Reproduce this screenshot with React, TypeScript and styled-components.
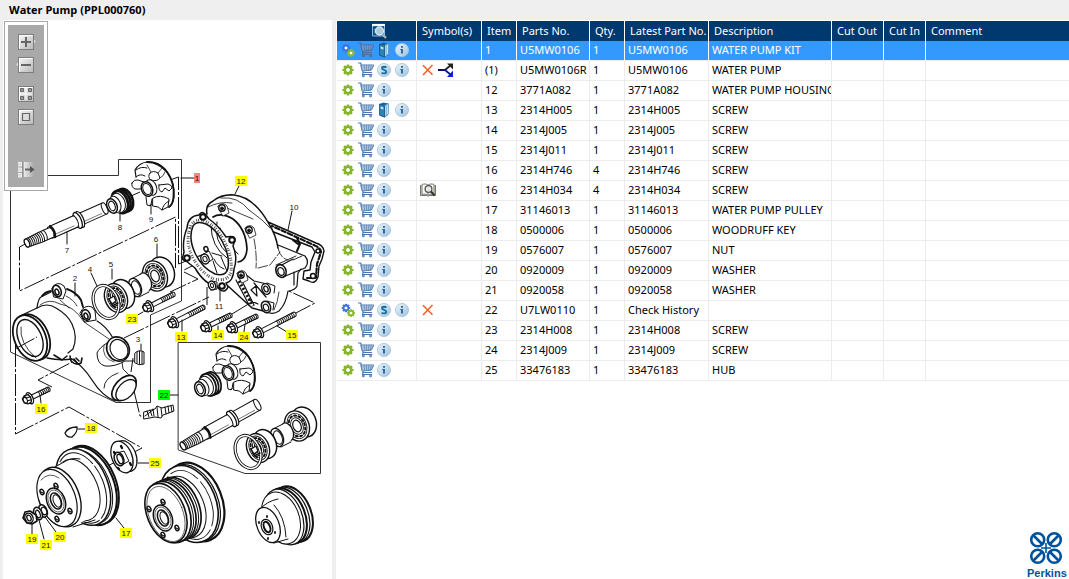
import React from "react";
import styled, { createGlobalStyle, css } from "styled-components";

const GlobalStyle = createGlobalStyle`
  * { box-sizing: border-box; }
  body {
    margin: 0;
    background: #efefef;
    color: #000;
    font: 11px/18px "Noto Sans", "Open Sans", sans-serif;
  }
`;

const Page = styled.div`
  display: flex;
  flex-direction: column;
  min-height: 100vh;
`;

const TitleBar = styled.header`
  height: 20px;
  padding: 0 9px;
  background: #efefef;
`;

const Title = styled.h1`
  margin: 0;
  font-family: "Open Sans", "Noto Sans", sans-serif;
  font-size: 11px;
  font-weight: 700;
  line-height: 20px;
`;

const Workspace = styled.main`
  display: flex;
  flex: 1;
  gap: 4px;
  padding-left: 3px;
`;

const DrawingPane = styled.section`
  position: relative;
  flex: none;
  background: #fff;
`;

const Drawing = styled.svg`
  display: block;
  fill: none;
  stroke: #111;
  stroke-width: 1;
  stroke-linecap: round;
  stroke-linejoin: round;

  text {
    font: 8px "Liberation Sans", Arial, sans-serif;
    fill: #111;
    stroke: none;
    text-anchor: middle;
  }
`;

const Toolbar = styled.div`
  position: absolute;
  top: 1px;
  left: 1px;
  display: flex;
  flex-direction: column;
  align-items: center;
  width: 44px;
  padding-top: 7px;
  height: 170px;
  border: 1px solid #a9a9a9;
  background: #a9a9a9;
  box-shadow: inset 0 0 0 3px #fff;
`;

const ToolButton = styled.button<{ $gap?: number }>`
  display: block;
  flex: none;
  width: 20px;
  height: 23px;
  padding: 3px 0 0;
  margin-top: ${(p) => p.$gap ?? 0}px;
  border: 0;
  background: none;

  svg { display: block; }
`;

const PartsPane = styled.section`
  display: flex;
  flex: 1;
  flex-direction: column;
  min-width: 0;
  padding: 1px 0 0 1px;
  background: #fff;
`;

const PartsTable = styled.table`
  width: 100%;
  table-layout: fixed;
  border-collapse: separate;
  border-spacing: 0;
`;

const Column = styled.col<{ $width?: number }>`
  ${(p) => p.$width && css`width: ${p.$width}px;`}
`;

const HeadCell = styled.th`
  height: 20px;
  padding: 0 0 1px 5px;
  overflow: hidden;
  border-right: 1px solid #fff;
  background: #003870;
  color: #fff;
  font-weight: 400;
  text-align: left;
  white-space: nowrap;

  &:last-child { border-right: 0; }
  svg { display: block; margin: 0 auto; }
`;

const Cell = styled.td`
  height: 20px;
  padding: 0 0 1px 3px;
  overflow: hidden;
  border-right: 1px solid #ececec;
  border-bottom: 1px solid #ececec;
  white-space: nowrap;

  &:last-child { border-right: 0; }
`;

const Row = styled.tr<{ $selected?: boolean }>`
  ${(p) =>
    p.$selected &&
    css`
      color: #fff;
      ${Cell} {
        background: #3399ff;
        border-right-color: #fff;
      }
    `}
`;

const IconRow = styled.div`
  display: flex;
  align-items: center;
  height: 18px;
  margin-left: -1px;
`;

const IconButton = styled.button`
  display: grid;
  place-items: center;
  width: 18px;
  height: 18px;
  padding: 0;
  border: 0;
  background: none;
`;

const Brand = styled.footer`
  display: flex;
  justify-content: flex-end;
  margin-top: auto;
  padding: 0 2px 1px 0;
`;

/* ---------- icons ---------- */

function GearShape({ x, y, s, color }: { x: number; y: number; s: number; color: string }) {
  return (
    <g transform={`translate(${x} ${y}) scale(${s})`}>
      {[0, 45, 90, 135].map((r) => (
        <rect key={r} x="-1.3" y="-5.5" width="2.6" height="11" rx="0.6" fill={color} transform={`rotate(${r})`} />
      ))}
      <circle r="3.1" fill="#fff" stroke={color} strokeWidth="2.4" />
    </g>
  );
}

const Gear = () => (
  <svg width="18" height="18"><GearShape x={9} y={9} s={1} color="#86b52c" /></svg>
);

const Gears = () => (
  <svg width="18" height="18">
    <GearShape x={7} y={7} s={0.78} color="#3f74dc" />
    <GearShape x={12} y={12} s={0.72} color="#8cba2e" />
  </svg>
);

const Cart = ({ dim }: { dim?: boolean }) => (
  <svg width="18" height="18" fill="none" stroke={dim ? "#4c6b98" : "#4a76ad"} strokeLinecap="round">
    <path d="M1.5 2h2.300l2.400 9.500h8.300" strokeWidth="1.200" />
    <path d="M4.200 4h12.600l-2.500 5.200-8.800.800z" fill={dim ? "#83aede" : "#d3e3f3"} strokeWidth=".9" />
    <path d="M4.800 6h11M5.400 8h9.500M7 4l.7 5.500M9.400 4l.3 5.500M11.800 4l-.2 5.500M14.200 4l-.7 5" strokeWidth=".6" />
    <path d="M6.200 11.500l-.700 2h9.300" strokeWidth="1.100" />
    <circle cx="6.200" cy="15" r=".9" /><circle cx="13.500" cy="15" r=".9" />
  </svg>
);

const Badge = ({ letter }: { letter: "i" | "S" }) => (
  <svg width="18" height="18">
    <defs>
      <linearGradient id="badge" x1="0" y1="0" x2="1" y2="1">
        <stop offset="0" stopColor="#edf5fa" /><stop offset="1" stopColor="#9cc2de" />
      </linearGradient>
    </defs>
    <circle cx="9" cy="9" r="6.600" fill="url(#badge)" stroke="#a3c4de" strokeWidth=".8" />
    {letter === "i" ? (
      <path d="M8 5h2v1.8H8zM7.2 8H10v4.6H8V9h-.8z" fill="#3567a3" />
    ) : (
      <path d="M11.3 6.6C10.6 5.7 7 5.2 7 7.2c0 2 4.3 1.4 4.3 3.6 0 2.1-3.6 1.8-4.7.8" fill="none" stroke="#1470a0" strokeWidth="1.9" />
    )}
  </svg>
);

const Book = () => (
  <svg width="18" height="18">
    <path d="M4.500 3l4-1.500 4.500 1v11.500l-3.500 2.500-5-2z" fill="#1d669f" />
    <path d="M9.500 4.500l4-2v10.500l-4 3z" fill="#c3e0f0" stroke="#4d8dba" strokeWidth=".7" />
    <path d="M11.200 4v10.500" stroke="#5f9cc4" strokeWidth=".7" />
    <path d="M4.500 3l5 1.500V16l-5-2z" fill="#2e83b7" stroke="#154f80" strokeWidth=".7" />
    <path d="M5.700 5.600l2.600.8v2l-2.600-.8z" fill="#d8edf7" />
  </svg>
);

const Cross = () => (
  <svg width="18" height="18"><path d="M4 4.2l9.5 9.5M13.5 4L4 14" fill="none" stroke="#f4632a" strokeWidth="1.6" /></svg>
);

const Branch = () => (
  <svg width="18" height="18" fill="none">
    <path d="M1 9h7" stroke="#10106c" strokeWidth="2" />
    <path d="M8 9l6-5" stroke="#222" strokeWidth="1.8" />
    <path d="M8 9l6 5" stroke="#0a14a8" strokeWidth="1.8" />
    <path d="M10 2.500h6v6z" fill="#222" />
    <path d="M16 9.500v6.500h-6z" fill="#0a1ee0" />
  </svg>
);

const BookSearch = () => (
  <svg width="18" height="18" fill="none" stroke="#77776c">
    <path d="M1.5 4v10.5h6.5l1 1 1-1h6.5V4" fill="#ddddce" />
    <path d="M3 3.5c2.5-1 4.5-.5 6 .5 1.500-1 3.500-1.500 6-.5v10c-2.500-.5-4.500-.5-6 .8-1.500-1.300-3.500-1.300-6-.8zM9 4v10" fill="#fafaf4" />
    <circle cx="9.500" cy="8" r="3.400" fill="#e4e9e6" stroke="#555" strokeWidth="1.300" />
    <path d="M12 10.500l3.500 4" stroke="#333" strokeWidth="2" />
  </svg>
);

const WindowSearch = () => (
  <svg width="18" height="18" fill="none">
    <path d="M2.500 3h12v11h-12z" fill="#0f4f86" stroke="#8dbcdc" />
    <path d="M2 3h13" stroke="#fff" strokeWidth="2.200" />
    <path d="M4 7.500h2M4 10h2" stroke="#5ea5d0" />
    <circle cx="9.500" cy="9" r="4" fill="#a4cbe4" stroke="#d8e4ec" strokeWidth="1.400" />
    <path d="M12.500 12.200l3.500 3.800" stroke="#a9b3bd" strokeWidth="2.200" />
  </svg>
);

function ToolIcon({ kind }: { kind: "in" | "out" | "fit" | "actual" | "panel" }) {
  return (
    <svg width="20" height="18" fill="none" stroke="#666">
      <defs>
        <linearGradient id="tool" x1="0" y1="0" x2="1" y2="1">
          <stop offset="0" stopColor="#f7f7f7" /><stop offset="1" stopColor="#b8b8b8" />
        </linearGradient>
        <linearGradient id="fade" x1="0" y1="0" x2="1" y2="0">
          <stop offset="0" stopColor="#f0f0f0" /><stop offset="1" stopColor="#a9a9a9" />
        </linearGradient>
      </defs>
      {kind === "in" && <path d="M17 6l2 2.500-2 2.500z" fill="#ddd" stroke="#eee" />}
      {kind === "out" && <path d="M3 6L1 8.500 3 11z" fill="#ddd" stroke="#eee" />}
      {kind !== "panel" && <rect x="2.500" y="1.500" width="15" height="15" fill="url(#tool)" stroke="#7d7d7d" />}
      {kind !== "panel" && <path d="M3.500 15.500V2.500H16.500" stroke="#fff" />}
      {kind === "in" && <path d="M5 9h10M10 4v10" strokeWidth="2" />}
      {kind === "out" && <path d="M5 9h10" strokeWidth="2" />}
      {kind === "fit" && (
        <>
          <path d="M4.500 3.500h3v3h-3zM12.500 3.500h3v3h-3zM4.500 11.500h3v3h-3zM12.500 11.500h3v3h-3z" fill="#999" />
          <path d="M10 3v12M4 9h12" stroke="#fff" />
        </>
      )}
      {kind === "actual" && <path d="M6.500 5.500h7v7h-7z" fill="#ddd" strokeWidth="1.200" />}
      {kind === "panel" && (
        <>
          <path d="M7 1h11v15H7z" fill="url(#fade)" stroke="none" />
          <path d="M2 1.500h3.500v3.500H2M2 7h3.500v3.500H2M2 12.500h3.500V16H2" fill="#ddd" stroke="#eee" />
          <path d="M7 1v15" stroke="#777" />
          <path d="M9 8.500h6" strokeWidth="2" />
          <path d="M14 5l4.500 3.500L14 12z" fill="#555" stroke="none" />
        </>
      )}
    </svg>
  );
}

/* ---------- exploded drawing ---------- */

type Pt = { x: number; y: number };
const WHITE = "#fff";

function Disc({ x, y, a, b, w = 1, fill = WHITE, r = -22, dash }: Pt & { a: number; b: number; w?: number; fill?: string; r?: number; dash?: string }) {
  return <ellipse rx={a} ry={b} transform={`translate(${x} ${y}) rotate(${r})`} fill={fill} strokeWidth={w} strokeDasharray={dash} />;
}

function Bolt({ x, y, x2, y2 }: Pt & { x2: number; y2: number }) {
  const len = Math.hypot(x2 - x, y2 - y);
  const angle = (Math.atan2(y2 - y, x2 - x) * 180) / Math.PI;
  const threads: number[] = [];
  for (let t = Math.max(9, len * 0.52); t < len; t += 2) threads.push(t);
  return (
    <g transform={`translate(${x} ${y}) rotate(${angle})`}>
      <path d={`M3 -2.200H${len}q2 2.200 0 4.400H3`} fill={WHITE} />
      {threads.map((t) => <path key={t} d={`M${t} -2.400q1.500 2.400 0 4.800`} strokeWidth=".9" />)}
      <ellipse cx="2" rx="3" ry="6" fill={WHITE} strokeWidth="1.300" />
      <path d="M-5 -2.500l3-2 4 .5 1 4-1 4-4 .5-3-2.500z" fill={WHITE} strokeWidth="1.300" />
      <ellipse cx="-3" rx="2" ry="3" />
      <path d="M-2-4.500l1 3 4 .5M-1 1.500l3.500.5" />
    </g>
  );
}

function Shaft({ x, y, angle }: Pt & { angle: number }) {
  return (
    <g transform={`translate(${x} ${y}) rotate(${angle})`}>
      <path d="M58 -6H85q4 6 0 12H58z" fill={WHITE} />
      <ellipse cx="85" rx="2.500" ry="6" fill={WHITE} />
      <path d="M25 -6H56V6H25z" fill={WHITE} />
      <ellipse cx="58" rx="3.500" ry="8.500" fill={WHITE} strokeWidth="1.200" />
      <ellipse cx="55.500" rx="3.500" ry="8.500" fill={WHITE} strokeWidth="1.300" />
      <path d="M53 -6q3 6 0 12H28q3-6 0-12z" fill={WHITE} stroke="none" />
      <path d="M28-6H54M28 6H54q2.500-6 0-12" />
      <path d="M28-6q3 6 0 12" strokeWidth="2.400" />
      <path d="M0-4.200L14-5H27q3 5 0 10.500H14L0 4.200z" fill={WHITE} />
      <path d="M17-5q2.500 5 0 10M20-5q2.500 5 0 10" />
      {[3, 5, 7, 9, 11, 13, 15].map((t) => <path key={t} d={`M${t} -4.500q2 4.500 0 9`} strokeWidth=".9" />)}
      <ellipse rx="2.300" ry="4.300" fill={WHITE} strokeWidth="1.400" />
      <path d="M30 3.500h20M62 3.500h18" strokeWidth=".5" />
    </g>
  );
}

function Seal({ x, y, dark }: Pt & { dark?: boolean }) {
  const w = dark ? 2.8 : 1.8;
  return (
    <g transform={`translate(${x} ${y})`}>
      <Disc x={7} y={-3} a={7.500} b={11.500} w={w} />
      <Disc x={4.500} y={-2} a={7.500} b={11.500} w={w} />
      <Disc x={2} y={-1} a={7.500} b={11.500} w={w} />
      <Disc x={0} y={0} a={7} b={10} w={1} />
      <path d="M-8-4L0-7.500 5 8-3 11z" fill={WHITE} stroke="none" />
      <Disc x={-3} y={1.500} a={5.500} b={8.500} />
      <Disc x={-6} y={3} a={5} b={7.500} w={1.500} />
      <Disc x={-6} y={3} a={3} b={5} w={1.200} />
    </g>
  );
}

function Impeller({ x, y }: Pt) {
  return (
    <g transform={`translate(${x} ${y})`}>
      {/* back plate */}
      <path d="M-11-12L-12-19Q-8-26 0-27Q10-28 18-20Q28-8 27 8Q26 16 21 19L15 21 0 17-1 9z" fill={WHITE} stroke="none" />
      <path d="M-11-12L-12-19Q-8-26 0-27Q10-28 18-20Q28-8 27 8Q26 16 22 18" strokeWidth="1.200" />
      <path d="M0-27Q12-27 20-17Q28-6 26.500 8Q26 15 22 18" strokeWidth="1.800" />
      {/* upper blades */}
      <path d="M-11-19q5-4 11-2M-11-12q4-4 9-1" />
      <path d="M3-16q3-3 8 0l2 5q-3 4-9 2-4-3-1-7z" fill={WHITE} />
      <path d="M0-24L4-17M11-16l4-5M13-11q4-2 5-6" strokeWidth=".8" />
      {/* left and right blades */}
      <path d="M-15-6q2-4 6-3l6 2-2 7-7 0q-4-2-3-6z" fill={WHITE} />
      <path d="M12-4l9-1q4 1 4 4l-3 3-4-3-3 4q-4-1-3-7z" fill={WHITE} />
      {/* lower blades */}
      <path d="M-1 8l1 8q2 1 4 0l1-6" fill={WHITE} />
      <path d="M6 9q7-4 16 1l-1 8-6 3q-3-4-9-4z" fill={WHITE} />
      <path d="M4 16l-1 1M15 21q1-6 7-9" />
      <path d="M0-7L5-8 10 5 4 8z" fill={WHITE} stroke="none" />
      <Disc x={4} y={-1.500} a={5.500} b={8} />
      <Disc x={0} y={0} a={5.500} b={7.500} w={1.500} />
      <Disc x={0} y={0} a={4} b={5.800} w={1} />
    </g>
  );
}

function Bearing({ x, y, a = 12, b = 15.500 }: Pt & { a?: number; b?: number }) {
  return (
    <g transform={`translate(${x} ${y})`}>
      <Disc x={7} y={-4} a={a} b={b} w={1.500} />
      <Disc x={0} y={0} a={a} b={b} w={1.400} />
      <Disc x={0} y={0} a={a - 2.500} b={b - 2.500} w={0.900} />
      <Disc x={0} y={0} a={a - 4.200} b={b - 4.700} w={2} dash="2 2.500" />
      <Disc x={0} y={0} a={a - 6} b={b - 7} w={0.900} />
      <Disc x={0} y={0} a={a - 8} b={b - 9.500} w={1.200} />
    </g>
  );
}

function BearingSet({ x, y }: Pt) {
  return (
    <g transform={`translate(${x} ${y})`}>
      <Bearing x={155} y={276} />
      <Disc x={145} y={282} a={6} b={9.500} w={1.200} />
      <path d="M131 279l10-5 8 17-10 5z" fill={WHITE} stroke="none" />
      <path d="M131 279l10-5M139 297l10-5" />
      <Disc x={135} y={287.500} a={6} b={9.500} w={1.400} />
      <Disc x={136} y={287.500} a={4} b={7} w={1} />
      <Bearing x={116} y={298} a={11} b={15} />
      <Disc x={106} y={302} a={13} b={18} w={1.400} fill="none" />
      <Disc x={106} y={302} a={11.500} b={16.500} w={2} fill="none" r={-22} />
      <Disc x={106} y={302} a={11.800} b={16.800} w={1.400} fill="none" r={-22} />
      <ellipse rx="12" ry="17" transform="translate(106 302) rotate(-22)" stroke="#fff" strokeWidth="1.400" />
      <path d="M109 299l5-3 2 5-4 3zM112 306l6-3" strokeWidth="1.400" fill={WHITE} />
    </g>
  );
}

function Hub({ x, y, holes }: Pt & { holes: [number, number][] }) {
  return (
    <g>
      <Disc x={x} y={y} a={9} b={13.500} w={1.400} />
      <Disc x={x} y={y} a={7.500} b={11.500} w={0.600} />
      <Disc x={x} y={y} a={5} b={8.500} w={1.500} />
      <Disc x={x + 1} y={y} a={3.500} b={6.500} w={1} />
      {holes.map(([hx, hy]) => (
        <g key={`${hx} ${hy}`}>
          <Disc x={hx} y={hy} a={1.800} b={2.800} w={1.500} />
          <path d={`M${hx - 1} ${hy}l2 1`} strokeWidth="1.200" />
        </g>
      ))}
    </g>
  );
}

const Axis = ({ d }: { d: string }) => <path d={d} strokeLinecap="butt" strokeDasharray="22 2 3 2" />;

function Housing() {
  return (
    <g>
      {/* rear gasket */}
      <path d="M268 222l48 21q7 2 8 8l-2 8-3 7-1 11q-3 8-9 4l-6-2 1-8 6-1 1-8 4-10-3-5-46-18z" fill={WHITE} strokeWidth="1.400" />
      <path d="M272 226l44 20q5 3 5 6l-4 12-1 14-9 0" strokeWidth="2.200" strokeDasharray="1 2.500 2 1.500" />
      <circle cx="318" cy="251" r="2" fill={WHITE} strokeWidth="1.500" />
      <circle cx="313" cy="276" r="2.500" fill={WHITE} strokeWidth="1.500" />
      <path d="M297 238l3 6-3 7M293 240l5 4" strokeWidth="2" />
      {/* main casting */}
      <path d="M207 214q-2-9 6-13 9-7 21-6 20 2 35 29 7 11 9 24l27 8q4 8-1 12l-6 3-1 14q-3 6-10 6 0 10-8 21-5 3-12 1l-15-9-25-19z" fill={WHITE} stroke="none" />
      <path d="M207 214q-2-9 6-13 9-7 21-6 20 2 35 29 7 11 9 24" strokeWidth="1.500" />
      <path d="M208 207q12-6 24-4M221 198q17-2 28 12M222 206l31 13M249 210l13 10 8 8" strokeWidth=".8" />
      <path d="M254 239q3 15 2 29M258 268l12-3 10-13M278 248q2 10 10 12" strokeWidth=".8" strokeDasharray="10 2" />
      <path d="M213 217q8-5 20 2 13 10 14 30-1 12-9 13" strokeWidth="1.700" />
      <path d="M211 225q0 22 16 33M217 222q-4 19 11 32M220 228q2 10 18 26" />
      <path d="M278 245l27 11q5 6 0 12l-22 9q-7-2-7-9l17-9" fill={WHITE} strokeWidth="1.200" />
      <path d="M276 265l20-9M293 260l9-4" strokeWidth=".9" />
      <Disc x={281} y={271} a={5} b={6.500} w={1.600} /><Disc x={281} y={271.500} a={3} b={4} w={1.200} />
      <path d="M301 269l-3 4-1 13q-2 4-8 5M294 272v13M288 291q-2 13-9 20-6 4-12 1" strokeWidth="1.200" />
      <path d="M279 292q-1 10-5 18" strokeWidth=".8" />
      <path d="M228 286l24 22 15 4" strokeWidth="1.500" />
      <path d="M236 280l13 25M240 277l14 28M245 274l9 7 13 3M254 283l12 14M256 286l1 10-6-6zM249 300l9 4" strokeWidth="1.200" />
      <path d="M239 281l14 25" strokeWidth="3" strokeDasharray="2 2" strokeLinecap="butt" />
      <path d="M269 280l7 5-2 9-8-2zM268 298l6 3-1 10-9-3z" fill={WHITE} stroke="none" />
      <path d="M267 283l8 3-1 7M267 301l7 2-1 7" />
      <Disc x={266} y={289} a={4} b={5.500} w={1.500} /><Disc x={266} y={289} a={2} b={3} w={1.300} />
      <Disc x={266} y={307} a={4.500} b={6} w={1.500} /><Disc x={266} y={307.500} a={2.500} b={3.500} w={1.300} />
      {[[222, 208], [249, 230], [241, 275]].map(([cx, cy]) => (
        <g key={cx}>
          <path d={`M${cx - 4} ${cy - 2}q5-5 9 0l2 7-6 3z`} fill={WHITE} strokeWidth=".8" />
          <circle cx={cx} cy={cy} r="3.200" fill={WHITE} strokeWidth="1.400" />
          <circle cx={cx} cy={cy + 0.500} r="1.500" fill="#111" />
        </g>
      ))}
      {/* front gasket */}
      <path d="M187 228q1-12 12-13 3-5 7 0l3 4q10 7 17 18 9-2 9 3l-2 6q5 12 1 23-1 13-8 14l2 4q-3 7-9 2l-2-3q-12-1-22-18l-9-7q-5-1-3-5l1-4q-2-11 3-24z M193 226q-5 12 2 27 7 15 20 21 11 3 13-6 2-13-6-27-7-13-16-17-9-4-13 2z" fill={WHITE} fillRule="evenodd" strokeWidth="1.500" />
      <path d="M190 228q-5 14 3 30 9 16 21 21 14 3 17-7 2-16-8-33-6-12-18-18-9-3-14 4z" strokeWidth="3" strokeLinecap="butt" strokeDasharray="1 2 1 1" stroke="#555" />
      {[[203, 217], [232, 240], [187, 258], [222, 286]].map(([cx, cy]) => (
        <circle key={cx} cx={cx} cy={cy} r="2.800" fill={WHITE} strokeWidth="2" />
      ))}
      <path d="M200 256l9-5 4 8-7 5zM212 253l10 3M214 259q3 7 10 10M221 257l6 14M213 261l4 12" />
      <Disc x={205} y={259} a={4} b={5} w={1.300} /><Disc x={205} y={259} a={2} b={2.800} w={1} />
      <Disc x={206} y={249} a={2} b={2.500} w={1.500} />
      <path d="M211 281l6 1v7l-6 1z" fill={WHITE} />
      <Disc x={212} y={285.500} a={3.500} b={4.500} w={1.400} /><Disc x={212} y={285.500} a={1.500} b={2.200} w={1} />
    </g>
  );
}

function PumpBody() {
  return (
    <g>
      <path d="M20 316l17-8q1-9 5-12l10-5-1-4q7-8 14 0l2 3q9 3 14 11l2 6 7 1q5 2 7 13 9 5 16 17l14 9q3 9-2 14l1 8 7 9q-7 17-18 22-13-7-20-22-11-17-23-20-12 5-25-1l-8 3z" fill={WHITE} stroke="none" />
      <path d="M20 316l17-8q1-9 4-11l10-5" strokeWidth="1.200" />
      <path d="M67 289q9 3 14 11l2 7M42 296q3-4 9-5" strokeWidth="1.900" />
      <path d="M37 308q10-6 19 0 12 7 16 16 6 13 1 25l-5 4" strokeWidth="1.200" />
      <path d="M40 305q9-7 20-1 14 2 24 18l25 17M60 300l9 8M66 296q8 4 11 10" strokeWidth=".8" />
      <path d="M52 288q5-8 12-2l2 5-3 8-9-2z" fill={WHITE} />
      <Disc x={57} y={291} a={4} b={6} w={1.600} /><Disc x={57} y={292} a={1.800} b={3} w={1.500} />
      <path d="M80 313q4-9 12-6l3 4 1 9-11 2z" fill={WHITE} />
      <Disc x={86} y={315} a={4} b={5.500} w={1.600} /><Disc x={86} y={316} a={1.800} b={3} w={1.500} />
      <path d="M97 321q9 5 16 17" strokeWidth="1.200" />
      <Disc x={33} y={337} a={15.500} b={24} w={1.800} r={-24} />
      <Disc x={30} y={338} a={15.500} b={24} w={1.800} r={-24} />
      <Disc x={30} y={338} a={11.500} b={19.500} w={1.400} r={-24} />
      <path d="M21 327q-2 16 15 31" strokeWidth=".8" />
      <Axis d="M15 349L37 337" />
      <path d="M47 358q13 3 25 1 11 7 20 21 10 16 23 21" strokeWidth="1.300" />
      <path d="M54 355l8 5 5-4M70 356l1 5q5 5 10 2l1-5M74 359l3 4M76 358l3 3" strokeWidth="1.600" />
      <path d="M107 343q-8 5-10 10 0 11 8 13 10 1 20-5" fill={WHITE} />
      <path d="M104 345q-3 13 10 17" strokeWidth=".7" />
      <Disc x={118} y={349} a={11} b={12.500} w={1.600} r={-30} />
      <Disc x={119} y={349.500} a={8.500} b={10.500} w={1.200} r={-30} />
      <path d="M122 362l1 7q5 6 12 10M118 373q-14 5-14 15" strokeWidth=".9" />
      <Disc x={124} y={388} a={9} b={15} w={1.700} r={43} />
      <Disc x={126} y={390} a={7.500} b={12.500} w={1.400} r={43} />
    </g>
  );
}

function Pulleys() {
  return (
    <g>
      {/* single-groove pulley */}
      <Disc x={91} y={485} a={25} b={41} w={2} />
      <Disc x={89} y={486} a={25} b={41} w={2} />
      <Disc x={86} y={487} a={24} b={39} w={1} />
      <Disc x={83} y={487} a={25} b={40} w={1.500} />
      <Disc x={82} y={488} a={22} b={37} w={1} dash="40 3" />
      <Disc x={78} y={490} a={20} b={32} w={1} />
      <path d="M45 473L63 462 95 515 73 527z" fill={WHITE} stroke="none" />
      <path d="M46 472l18-10M73 527l22-7M64 462q7-5 16-3" />
      <Disc x={60} y={497} a={19} b={31} w={1.400} />
      <Disc x={57} y={498} a={18} b={30} w={1.200} />
      <path d="M41 480q8-9 18-2M39 500q5 20 20 26" strokeWidth=".7" />
      <Hub x={56} y={501} holes={[[56, 486], [42, 492], [70, 511], [57, 519]]} />
      {/* grooved pulley */}
      <Disc x={195} y={502} a={27} b={41} w={2.200} />
      <Disc x={192} y={503} a={26} b={40} w={1.200} />
      <Disc x={189} y={504} a={27} b={40} w={1.600} />
      <Disc x={188} y={505} a={23} b={36} w={0.900} dash="30 4" />
      <Disc x={184} y={507} a={20} b={32} w={1} />
      {[0, 1, 2, 3, 4].map((n) => <Disc key={n} x={179 - n * 2.500} y={508 + n} a={20} b={32} w={n % 2 ? 1 : 1.700} />)}
      <Disc x={166} y={513} a={19} b={31} w={1.600} />
      <Disc x={166} y={514} a={17} b={29} w={0.600} />
      <Hub x={163} y={518} holes={[[163, 502], [149, 509], [177, 528], [163, 535]]} />
      {/* small pulley */}
      {[0, 1, 2, 3].map((n) => <Disc key={n} x={293 - n * 3} y={514 + n} a={18} b={29} w={n % 2 ? 1.200 : 2} />)}
      <Disc x={281} y={518} a={18} b={27} w={1} />
      <path d="M260 509q8-8 18-9l8 37-12 6z" fill={WHITE} stroke="none" />
      <path d="M259 510q8-9 19-11M274 543l14-4M274 505q11 12 12 32" />
      <Disc x={268} y={525} a={11} b={18.500} w={1.300} />
      <Disc x={267} y={527} a={5.500} b={8} w={1.200} /><Disc x={267} y={527} a={3} b={5.500} w={2} />
      <path d="M267 516v1M259 522v1M275 532v1M268 538v1" strokeWidth="1.800" />
      {/* hub */}
      <Disc x={126} y={456} a={10} b={16} w={1.200} />
      <Disc x={122} y={457} a={10} b={16.500} w={1.300} />
      <path d="M117 453l7-2 5 10-7 4z" fill={WHITE} />
      <Disc x={119} y={459} a={4.500} b={7} w={1.500} /><Disc x={120} y={459} a={2.500} b={5} w={1.300} />
      <path d="M121 446l1 2M130 463l1 2M114 452l1 2M118 468l1 1" strokeWidth="2.400" />
      {/* nut and washers */}
      <Disc x={43} y={511} a={4} b={6.500} w={1.500} /><Disc x={44} y={511} a={2.500} b={4} w={1.300} />
      <Disc x={38} y={513.500} a={4} b={6.500} w={1.500} /><Disc x={38} y={514} a={2} b={4} w={1.300} />
      <path d="M25 512l5-1 6 4 1 6-5 3-5-1-4-5z" fill={WHITE} strokeWidth="1.600" />
      <Disc x={29} y={518} a={4} b={5} w={1.400} /><Disc x={29} y={518} a={2} b={3} w={1.300} />
    </g>
  );
}

const callouts: { n: string; x: number; y: number; color?: string }[] = [
  { n: "1", x: 197, y: 178, color: "#ff8080" },
  ...([
    ["12", 241, 181], ["13", 181, 337], ["14", 218, 335], ["24", 244, 337], ["15", 292, 335],
    ["23", 132, 319], ["16", 41, 409], ["18", 91, 428], ["25", 155, 463], ["17", 126, 533],
    ["19", 32, 539], ["21", 46, 545], ["20", 60, 537],
  ] as [string, number, number][]).map(([n, x, y]) => ({ n, x, y, color: "#ffff00" })),
  { n: "22", x: 164, y: 395, color: "#00ff00" },
  ...([
    ["10", 294, 207], ["11", 219, 306], ["9", 151, 219], ["8", 120, 227], ["7", 67, 250],
    ["6", 156, 239], ["5", 111, 264], ["4", 90, 269], ["2", 75, 278], ["3", 138, 339],
  ] as [string, number, number][]).map(([n, x, y]) => ({ n, x, y })),
];

function ExplodedView() {
  return (
    <Drawing width="329" height="559" viewBox="3 20 329 559" role="img" aria-label="Water pump exploded view">
      <path d="M10.500 180V352L116 402.500H150.500V315L181.500 301V159.500H118.500V175.500H40" stroke="#333" />
      <path d="M178.500 342.500H320.500V473.500H245L178.500 450z" stroke="#333" />
      <Axis d="M27 243L19.500 247V291L175.500 217V268" />
      <Axis d="M170 180L178.500 177V264L204 254" />
      <Axis d="M104 208L140 192" />
      <Axis d="M124 338L209 297M184 272L198 279 170 292M207 287V305M267 281L315 303 294 314M232 314L260 297M204 260L184 270" />
      <Axis d="M15.500 345V434L69 407 142 448 100 470" />
      <Axis d="M52 387L38 380 72 362M134 391L140 416H146M122 361L134 361M131 372L133 358" />
      <Housing />
      <PumpBody />
      <Shaft x={27} y={243} angle={-24} />
      <Seal x={118} y={203} dark />
      <Impeller x={147} y={189} />
      <BearingSet x={0} y={0} />
      <Impeller x={228} y={373} />
      <Seal x={206} y={386} />
      <Shaft x={183} y={446} angle={-29} />
      <BearingSet x={142} y={150} />
      <Bolt x={148} y={307} x2={174} y2={294} />
      <Bolt x={173} y={323} x2={204} y2={307} />
      <Bolt x={206} y={327} x2={231} y2={315} />
      <Bolt x={232} y={328} x2={257} y2={316} />
      <Bolt x={258} y={333} x2={295} y2={314} />
      <Bolt x={28} y={399} x2={49} y2={389} />
      <path d="M135 353q4-4 9-1v12q-5 2-9-1zM137 352v11M139.500 351v13M142 351v13" strokeWidth="1" fill={WHITE} />
      <path d="M144 412l11-3 2-3 5 2 11-3 1 6-11 4-2 3-6-1-11 2z" fill={WHITE} />
      <path d="M147 411l2 6M150 410l2 6M153 409l1 7M157 407l1 10M161 408l1 8M165 407l1 7M168 406l1 7M171 406l1 6M145 416l8-6" />
      <path d="M65 433q3-6 12-6 1 5-5 10-5 1-7-4zM66 433" fill={WHITE} strokeWidth="1.300" />
      <Pulleys />
      <path d="M181 178h13M239 186l-4 8M292 211l-4 19M220 290v11M182 331v-11M218 330v-4M244 332l1-8M287 332l-10-6M136 316l7-4M151 214v-10M120 221v-11M67 244v-12M157 244v14M112 269v10M91 273l6 13M75 283v13M141 344v6M41 403l-1-8M78 429h8M170 395h8M138 463h12M124 528l-8-10M32 534v-10M44 539l-5-19M56 532l-11-15" />
      {callouts.map((c) => (
        <g key={c.n}>
          {c.color && (
            <rect x={c.x - (c.n.length > 1 ? 6 : 3)} y={c.y - 5} width={c.n.length > 1 ? 12 : 6} height="10" fill={c.color} stroke="none" />
          )}
          <text x={c.x} y={c.y + 3}>{c.n}</text>
        </g>
      ))}
    </Drawing>
  );
}

/* ---------- data ---------- */

type IconName = "gear" | "gears" | "cart" | "book" | "info" | "super" | "cross" | "branch" | "booksearch";

const icons: Record<IconName, { label: string; draw: (selected?: boolean) => React.ReactNode }> = {
  gear: { label: "Part", draw: () => <Gear /> },
  gears: { label: "Kit", draw: () => <Gears /> },
  cart: { label: "Add to cart", draw: (selected) => <Cart dim={selected} /> },
  book: { label: "Catalogue", draw: () => <Book /> },
  info: { label: "Information", draw: () => <Badge letter="i" /> },
  super: { label: "Supersession", draw: () => <Badge letter="S" /> },
  cross: { label: "Not available", draw: () => <Cross /> },
  branch: { label: "Alternatives", draw: () => <Branch /> },
  booksearch: { label: "Look up", draw: () => <BookSearch /> },
};

interface Part {
  tools: IconName[];
  symbols?: IconName[];
  item: string;
  no: string;
  qty: number;
  latest?: string;
  text: string;
}

const basic: IconName[] = ["gear", "cart", "info"];

const parts: Part[] = [
  { tools: ["gears", "cart", "book", "info"], item: "1", no: "U5MW0106", qty: 1, text: "WATER PUMP KIT" },
  { tools: ["gear", "cart", "super", "info"], symbols: ["cross", "branch"], item: "(1)", no: "U5MW0106R", qty: 1, latest: "U5MW0106", text: "WATER PUMP" },
  { tools: basic, item: "12", no: "3771A082", qty: 1, text: "WATER PUMP HOUSING" },
  { tools: ["gear", "cart", "book", "info"], item: "13", no: "2314H005", qty: 1, text: "SCREW" },
  { tools: basic, item: "14", no: "2314J005", qty: 1, text: "SCREW" },
  { tools: basic, item: "15", no: "2314J011", qty: 1, text: "SCREW" },
  { tools: basic, item: "16", no: "2314H746", qty: 4, text: "SCREW" },
  { tools: basic, symbols: ["booksearch"], item: "16", no: "2314H034", qty: 4, text: "SCREW" },
  { tools: basic, item: "17", no: "31146013", qty: 1, text: "WATER PUMP PULLEY" },
  { tools: basic, item: "18", no: "0500006", qty: 1, text: "WOODRUFF KEY" },
  { tools: basic, item: "19", no: "0576007", qty: 1, text: "NUT" },
  { tools: basic, item: "20", no: "0920009", qty: 1, text: "WASHER" },
  { tools: basic, item: "21", no: "0920058", qty: 1, text: "WASHER" },
  { tools: ["gears", "cart", "super", "info"], symbols: ["cross"], item: "22", no: "U7LW0110", qty: 1, latest: "Check History", text: "" },
  { tools: basic, item: "23", no: "2314H008", qty: 1, text: "SCREW" },
  { tools: basic, item: "24", no: "2314J009", qty: 1, text: "SCREW" },
  { tools: basic, item: "25", no: "33476183", qty: 1, text: "HUB" },
];

const widths = [80, 65, 35, 73, 35, 84, 123, 52, 42, undefined];
const headings = ["Symbol(s)", "Item", "Parts No.", "Qty.", "Latest Part No.", "Description", "Cut Out", "Cut In", "Comment"];

function Icons({ names, selected }: { names: IconName[]; selected?: boolean }) {
  return (
    <IconRow>
      {names.map((name) => (
        <IconButton key={name} type="button" aria-label={icons[name].label}>
          {icons[name].draw(selected)}
        </IconButton>
      ))}
    </IconRow>
  );
}

function PerkinsLogo() {
  return (
    <svg width="40" height="48" viewBox="1027 530 40 48" role="img" aria-label="Perkins" fill="none" stroke="#00529b">
      {[0, 90, 180, 270].map((r) => (
        <g key={r} transform={`translate(1046 548) rotate(${r})`}>
          <circle cx="-8.300" cy="-8.300" r="6.500" strokeWidth="2.600" />
          <path d="M-12.500-12.500L-4-4" strokeWidth="2.600" />
        </g>
      ))}
      <path d="M1041 548h10M1046 543v10" strokeWidth="1.600" />
      <text x="1027" y="577" fill="#00529b" stroke="none" fontFamily="Liberation Sans, Arial, sans-serif" fontSize="11" fontWeight="700">Perkins</text>
    </svg>
  );
}

export default function App() {
  return (
    <Page>
      <GlobalStyle />
      <TitleBar><Title>Water Pump (PPL000760)</Title></TitleBar>
      <Workspace>
        <DrawingPane>
          <ExplodedView />
          <Toolbar role="toolbar" aria-label="Drawing tools">
            <ToolButton type="button" aria-label="Zoom in"><ToolIcon kind="in" /></ToolButton>
            <ToolButton type="button" aria-label="Zoom out"><ToolIcon kind="out" /></ToolButton>
            <ToolButton type="button" aria-label="Fit to window" $gap={6}><ToolIcon kind="fit" /></ToolButton>
            <ToolButton type="button" aria-label="Actual size"><ToolIcon kind="actual" /></ToolButton>
            <ToolButton type="button" aria-label="Toggle panel" $gap={30}><ToolIcon kind="panel" /></ToolButton>
          </Toolbar>
        </DrawingPane>
        <PartsPane>
          <PartsTable>
            <colgroup>{widths.map((w, i) => <Column key={i} $width={w} />)}</colgroup>
            <thead>
              <tr>
                <HeadCell scope="col" aria-label="Actions"><WindowSearch /></HeadCell>
                {headings.map((h) => <HeadCell key={h} scope="col">{h}</HeadCell>)}
              </tr>
            </thead>
            <tbody>
              {parts.map((p, i) => (
                <Row key={p.no} $selected={i === 0}>
                  <Cell><Icons names={p.tools} selected={i === 0} /></Cell>
                  <Cell>{p.symbols && <Icons names={p.symbols} />}</Cell>
                  <Cell>{p.item}</Cell>
                  <Cell>{p.no}</Cell>
                  <Cell>{p.qty}</Cell>
                  <Cell>{p.latest ?? p.no}</Cell>
                  <Cell>{p.text}</Cell>
                  <Cell />
                  <Cell />
                  <Cell />
                </Row>
              ))}
            </tbody>
          </PartsTable>
          <Brand><PerkinsLogo /></Brand>
        </PartsPane>
      </Workspace>
    </Page>
  );
}
